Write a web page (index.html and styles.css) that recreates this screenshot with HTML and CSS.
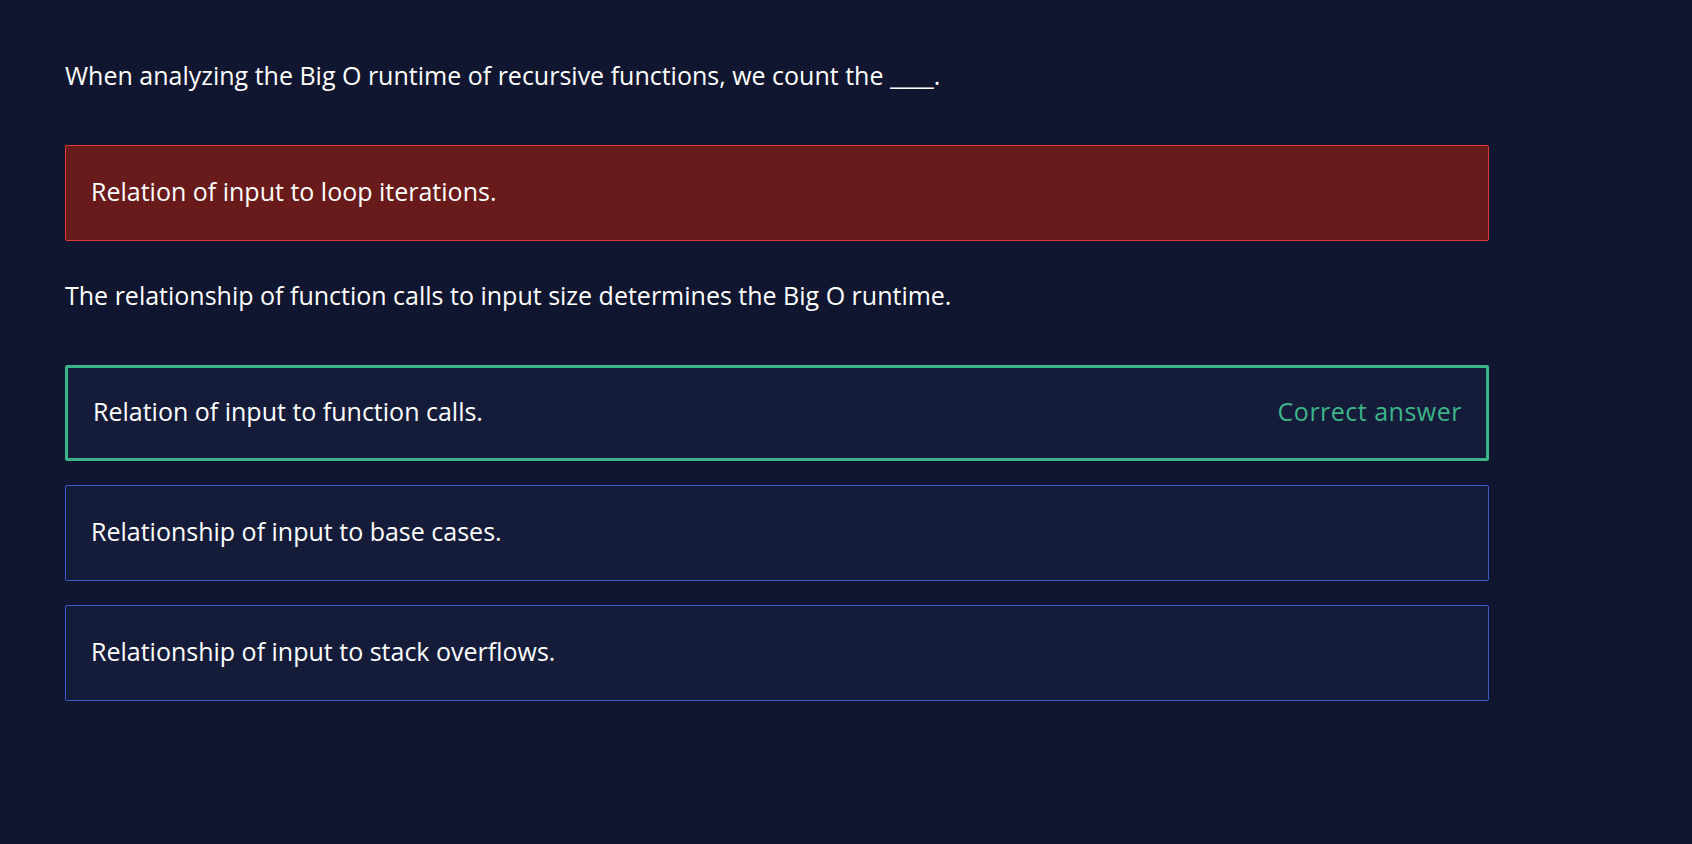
FILE: index.html
```html
<!DOCTYPE html>
<html lang="en">
<head>
<meta charset="utf-8">
<title>Quiz</title>
<link rel="stylesheet" href="styles.css">
</head>
<body>
<main class="quiz">
  <p class="question">When analyzing the Big O runtime of recursive functions, we count the ____.</p>
  <div class="option option--wrong">
    <span class="option__text">Relation of input to loop iterations.</span>
  </div>
  <p class="explanation">The relationship of function calls to input size determines the Big O runtime.</p>
  <div class="options">
    <div class="option option--correct">
      <span class="option__text">Relation of input to function calls.</span>
      <span class="option__label">Correct answer</span>
    </div>
    <div class="option">
      <span class="option__text">Relationship of input to base cases.</span>
    </div>
    <div class="option">
      <span class="option__text">Relationship of input to stack overflows.</span>
    </div>
  </div>
</main>
</body>
</html>
```

FILE: styles.css
```css
* { box-sizing: border-box; }
html, body {
  margin: 0;
  padding: 0;
  background: #10162f;
  height: 100%;
}
body {
  font-family: "Open Sans", Lato, sans-serif;
  color: #ffffff;
}
.quiz {
  width: 1424px;
  margin-left: 65px;
  padding-top: 57px;
  display: flex;
  flex-direction: column;
}
.question, .explanation {
  margin: 0;
  font-size: 25px;
  line-height: 36px;
}
.question { margin-bottom: 52px; }
.explanation { margin: 36px 0 52px; }
.options {
  display: flex;
  flex-direction: column;
  gap: 24px;
}
.option {
  height: 96px;
  display: flex;
  align-items: center;
  justify-content: space-between;
  padding: 0 25px 4px;
  border: 1px solid #3a5ccb;
  border-radius: 2px;
  background: #151c3a;
  font-size: 25px;
  line-height: 36px;
}
.option--wrong {
  background: #691a1a;
  border-color: #e0393a;
}
.option--correct {
  border: 3px solid #3bb48a;
  padding: 0 24px 4px 25px;
}
.option__label {
  color: #3bb48a;
  letter-spacing: 0.5px;
}
```
